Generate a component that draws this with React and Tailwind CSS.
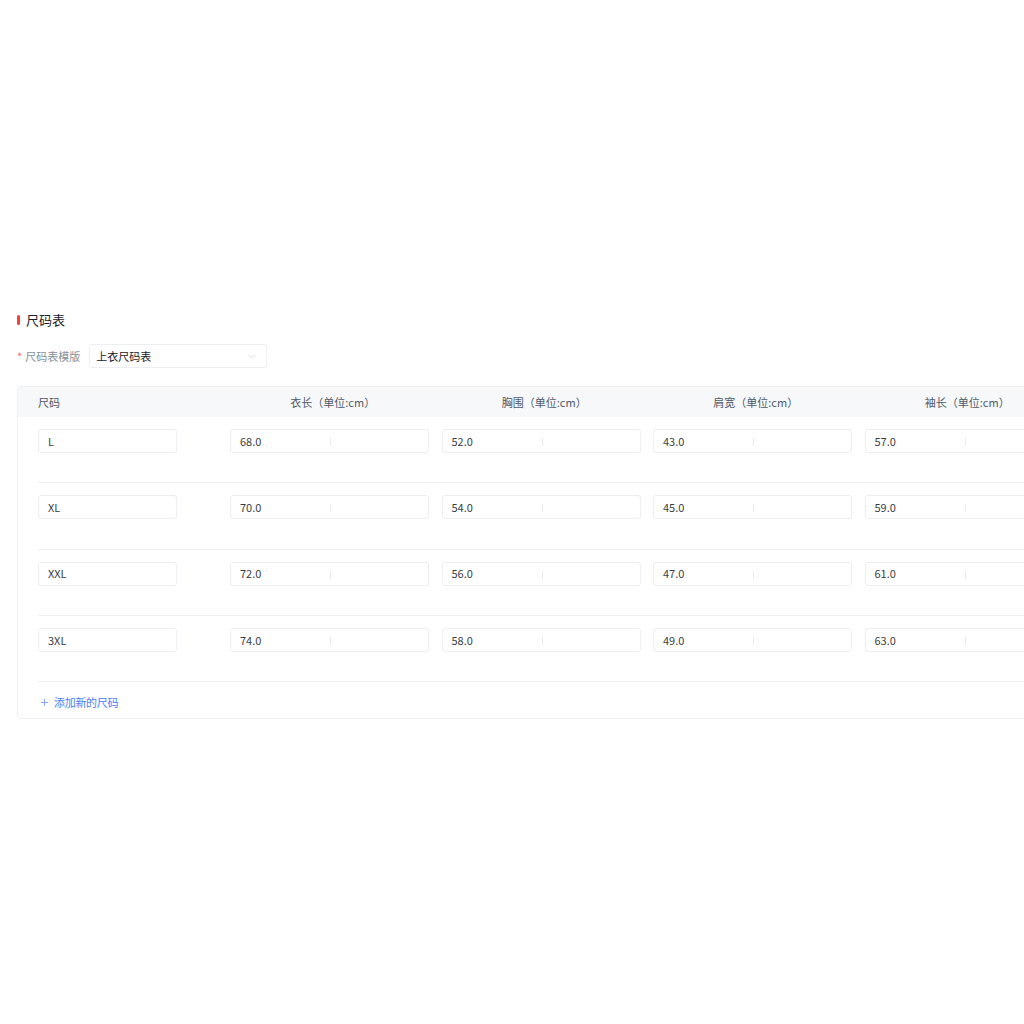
import { ChevronDown, Plus } from 'lucide-react';

const columns = ['衣长（单位:cm）', '胸围（单位:cm）', '肩宽（单位:cm）', '袖长（单位:cm）'];

const rows = [
  { size: 'L', values: ['68.0', '52.0', '43.0', '57.0'] },
  { size: 'XL', values: ['70.0', '54.0', '45.0', '59.0'] },
  { size: 'XXL', values: ['72.0', '56.0', '47.0', '61.0'] },
  { size: '3XL', values: ['74.0', '58.0', '49.0', '63.0'] },
];

function NumberInput({ value }) {
  return (
    <div className="relative flex h-6 w-[199px] items-center rounded-[3px] border border-[#edeef1] bg-white pl-[9px] text-[11px] text-[#3a3d42]">
      {value}
      <span className="absolute left-[99px] top-[8px] h-[8px] w-px bg-[#e8e9ec]" />
    </div>
  );
}

export default function App() {
  return (
    <div className="min-h-[1024px] w-full overflow-hidden bg-white pt-[312px] pl-[17px] font-['Noto_Sans_CJK_SC','Noto_Sans',sans-serif]">
      <div className="flex h-4 items-center">
        <span className="h-[10px] w-[3px] rounded-sm bg-[#f53f3f]" />
        <span className="ml-[6px] text-[13px] text-[#1d2129]">尺码表</span>
      </div>

      <div className="mt-4 flex items-center">
        <span className="text-[11px] text-[#86909c]">
          <span className="mr-[3px] text-[#f76560]">*</span>尺码表模版
        </span>
        <div className="ml-[9px] flex h-6 w-[178px] items-center justify-between rounded-[3px] border border-[#eceef1] pl-[6px] pr-[9px] text-[11px] text-[#1d2129]">
          上衣尺码表
          <ChevronDown size={11} strokeWidth={1.3} className="text-[#c2c5cb]" />
        </div>
      </div>

      <div className="mt-[18px] w-[1100px] rounded-[4px] border border-[#eff0f2]">
        <div className="flex h-[30px] items-center bg-[#f7f8fa] pl-[20px] text-[11px] text-[#4e5969]">
          <div className="w-[192px]">尺码</div>
          {columns.map((c) => (
            <div key={c} className="w-[211.5px] pr-[6px] text-center">{c}</div>
          ))}
        </div>

        <div className="pl-[20px]">
          {rows.map((r) => (
            <div key={r.size} className="flex border-b border-[#f0f1f3] pt-3 pb-[29.3px]">
              <div className="w-[192px]">
                <div className="flex h-6 w-[139px] items-center rounded-[3px] border border-[#edeef1] pl-[9px] text-[11px] text-[#3a3d42]">
                  {r.size}
                </div>
              </div>
              {r.values.map((v, i) => (
                <div key={i} className="w-[211.5px]">
                  <NumberInput value={v} />
                </div>
              ))}
            </div>
          ))}
          <div className="flex h-[36px] items-center pl-[1px] pt-[4px] text-[11px] tracking-[-0.3px] text-[#4d7cf5]">
            <Plus size={11} strokeWidth={1.4} className="mr-[4px]" />
            添加新的尺码
          </div>
        </div>
      </div>
    </div>
  );
}
